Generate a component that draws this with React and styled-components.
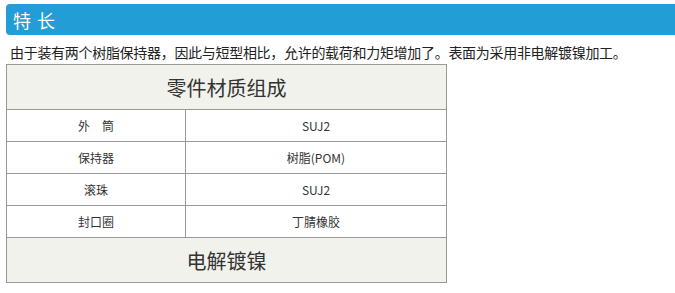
import React from "react";
import styled, { createGlobalStyle } from "styled-components";

const Global = createGlobalStyle`
  html, body { margin: 0; padding: 0; background: #fff; }
  body { font-family: "Noto Sans CJK SC", "Liberation Sans", sans-serif; color: #333; }
`;

const Page = styled.div`
  padding: 4px 0 0 6px;
`;

const TitleBar = styled.div`
  height: 31px;
  background: #239dd6;
  border-radius: 4px 0 0 4px;
  display: flex;
  align-items: center;
  padding-left: 7px;
  color: #fff;
  font-size: 18px;
  letter-spacing: 1px;
`;

const Intro = styled.p`
  margin: 0;
  padding: 8px 0 0 4px;
  height: 29px;
  box-sizing: border-box;
  font-size: 14px;
  line-height: 18px;
  letter-spacing: -0.3px;
  color: #222;
  white-space: nowrap;
`;

const Table = styled.table`
  border-collapse: collapse;
  width: 441px;
  font-size: 12px;
  color: #333;
`;

const Cell = styled.td`
  border: 1px solid #999;
  text-align: center;
  padding: 0;
  height: ${(p) => (p.$big ? "44px" : "31px")};
  font-size: ${(p) => (p.$big ? "20px" : "12px")};
  background: ${(p) => (p.$big ? "#f1f2ec" : "#fff")};
  width: ${(p) => p.$w || "auto"};
  font-family: "Noto Sans CJK SC", "Liberation Sans", sans-serif;
`;

const rows = [
  ["外　筒", "SUJ2"],
  ["保持器", "树脂(POM)"],
  ["滚珠", "SUJ2"],
  ["封口圈", "丁腈橡胶"],
];

export default function App() {
  return (
    <Page>
      <Global />
      <TitleBar>特 长</TitleBar>
      <Intro>由于装有两个树脂保持器，因此与短型相比，允许的载荷和力矩增加了。表面为采用非电解镀镍加工。</Intro>
      <Table>
        <tbody>
          <tr>
            <Cell $big colSpan={2}>零件材质组成</Cell>
          </tr>
          {rows.map(([a, b], i) => (
            <tr key={i}>
              <Cell $w="178px">{a}</Cell>
              <Cell>{b}</Cell>
            </tr>
          ))}
          <tr>
            <Cell $big colSpan={2}>电解镀镍</Cell>
          </tr>
        </tbody>
      </Table>
    </Page>
  );
}
